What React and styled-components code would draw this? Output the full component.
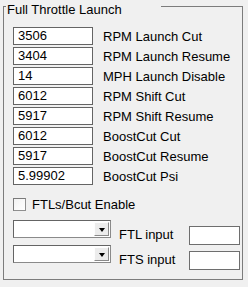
import React from "react";
import styled, { createGlobalStyle } from "styled-components";

const Global = createGlobalStyle`
  html, body { margin: 0; padding: 0; background: #f0f0f0; }
  body { font-family: "Liberation Sans", Arial, sans-serif; font-size: 13px; color: #000; }
  * { box-sizing: border-box; }
`;

const Page = styled.div`
  width: 248px;
  height: 287px;
  padding: 6px 5px 0 3px;
  background: #f0f0f0;
`;

const Group = styled.div`
  position: relative;
  width: 240px;
  height: 274px;
  border: 1px solid #7c7c7c;
  padding: 20px 0 0 9px;
  display: flex;
  flex-direction: column;
`;

const Legend = styled.div`
  position: absolute;
  left: 2px;
  top: -5px;
  width: 155px;
  height: 15px;
  line-height: 15px;
  padding-left: 1px;
  background: #f0f0f0;
  white-space: nowrap;
`;

const Rows = styled.div`
  display: flex;
  flex-direction: column;
  gap: 2px;
`;

const Row = styled.div`
  display: flex;
  align-items: center;
  height: 18px;
`;

const Field = styled.div`
  width: 80px;
  height: 18px;
  border: 1px solid #646464;
  background: #fff;
  padding-left: 4px;
  line-height: 16px;
  margin-right: 10px;
  white-space: nowrap;
`;

const Label = styled.span`
  line-height: 15px;
  white-space: nowrap;
`;

const CheckRow = styled.label`
  display: flex;
  align-items: center;
  height: 15px;
  margin-top: 12px;
  gap: 6px;
`;

const Check = styled.span`
  width: 13px;
  height: 13px;
  border: 1px solid #8f8f8f;
  border-top-color: #7a7a7a;
  border-left-color: #7a7a7a;
  background: linear-gradient(135deg, #f2f2f2, #ffffff);
`;

const Bottom = styled.div`
  display: flex;
  flex-direction: column;
  margin-top: 8px;
`;

const BottomRow = styled.div`
  display: flex;
  align-items: flex-start;
  height: 25px;
`;

const Combo = styled.div`
  display: flex;
  width: 98px;
  height: 18px;
  border: 1px solid #8a8a8a;
  border-top-color: #646464;
  border-left-color: #646464;
  background: #fff;
  justify-content: flex-end;
  padding: 1px;
`;

const DropButton = styled.div`
  width: 15px;
  height: 100%;
  background: #ececec;
  border: 1px solid;
  border-color: #fdfdfd #8a8a8a #8a8a8a #fdfdfd;
  display: flex;
  align-items: center;
  justify-content: center;
`;

const Arrow = styled.span`
  width: 0;
  height: 0;
  border-left: 3.5px solid transparent;
  border-right: 3.5px solid transparent;
  border-top: 4px solid #000;
  margin-top: 1px;
`;

const SideLabel = styled.span`
  width: 70px;
  margin-left: 8px;
  margin-top: 7px;
  line-height: 15px;
  white-space: nowrap;
`;

const SmallBox = styled.div`
  width: 51px;
  height: 19px;
  margin-top: 6px;
  border: 1px solid #6e6e6e;
  background: #fff;
`;

const rows = [
  ["3506", "RPM Launch Cut"],
  ["3404", "RPM Launch Resume"],
  ["14", "MPH Launch Disable"],
  ["6012", "RPM Shift Cut"],
  ["5917", "RPM Shift Resume"],
  ["6012", "BoostCut Cut"],
  ["5917", "BoostCut Resume"],
  ["5.99902", "BoostCut Psi"],
];

export default function App() {
  return (
    <>
      <Global />
      <Page>
        <Group>
          <Legend>Full Throttle Launch</Legend>
          <Rows>
            {rows.map(([v, l], i) => (
              <Row key={i}>
                <Field>{v}</Field>
                <Label>{l}</Label>
              </Row>
            ))}
          </Rows>
          <CheckRow>
            <Check />
            <Label>FTLs/Bcut Enable</Label>
          </CheckRow>
          <Bottom>
            {["FTL input", "FTS input"].map((t) => (
              <BottomRow key={t}>
                <Combo>
                  <DropButton>
                    <Arrow />
                  </DropButton>
                </Combo>
                <SideLabel>{t}</SideLabel>
                <SmallBox />
              </BottomRow>
            ))}
          </Bottom>
        </Group>
      </Page>
    </>
  );
}
